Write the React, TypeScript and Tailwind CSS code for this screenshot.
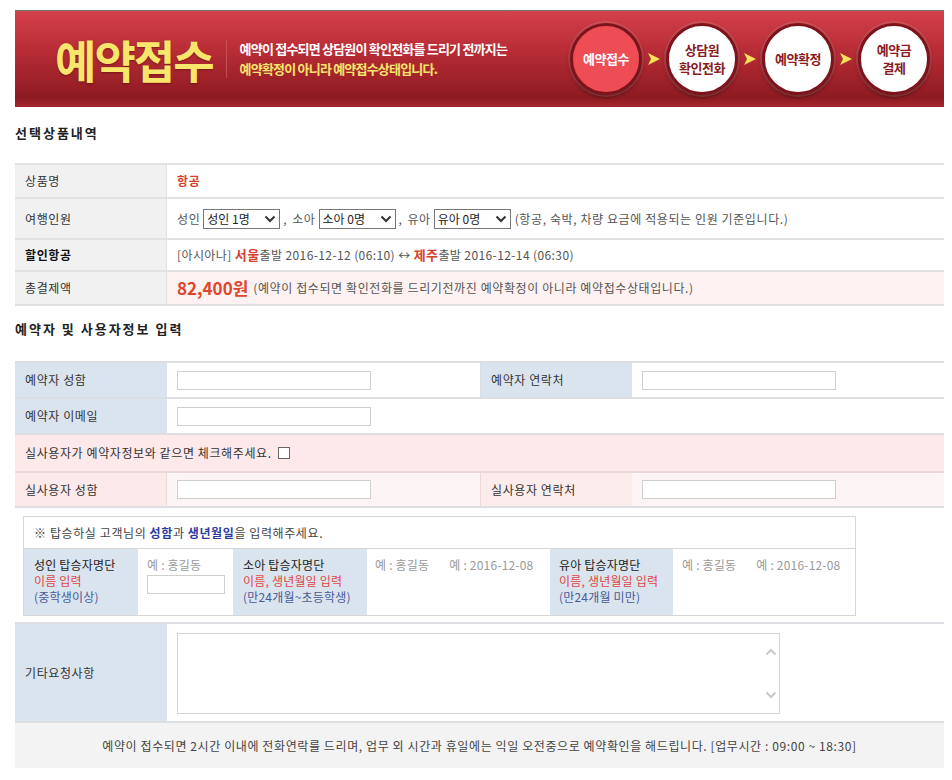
import React from "react";

const Chevron = ({ dir = "down", className = "" }: { dir?: "down" | "up"; className?: string }) => (
  <svg width="12" height="8" viewBox="0 0 12 8" className={className}>
    <path
      d={dir === "down" ? "M1.5 1.5 L6 6 L10.5 1.5" : "M1.5 6.5 L6 2 L10.5 6.5"}
      fill="none"
      stroke="currentColor"
      strokeWidth="2"
    />
  </svg>
);

const Select = ({ value }: { value: string }) => (
  <span className="inline-flex items-center justify-between w-[77px] h-[20px] border border-[#777] bg-white pl-[3px] pr-[3px] text-[12px] text-[#222] tracking-normal">
    <span>{value}</span>
    <Chevron className="text-[#333]" />
  </span>
);

const Arrow = () => (
  <svg width="14" height="14" viewBox="0 0 14 14">
    <polygon points="1,1 13,7 1,13 4,7" fill="#f6e15a" />
  </svg>
);

const Step = ({ lines, active }: { lines: string[]; active?: boolean }) => (
  <div
    className={`w-[72px] h-[72px] rounded-full border-[3px] border-[#7e141b] shadow-[0_0_0_2px_rgba(255,255,255,0.12),0_2px_4px_rgba(0,0,0,0.45)] flex flex-col items-center justify-center text-[13px] font-bold leading-[18px] tracking-[-0.5px] ${
      active ? "bg-[#ee4d56] text-white" : "bg-white text-[#8a1a22]"
    }`}
  >
    {lines.map((l) => (
      <span key={l}>{l}</span>
    ))}
  </div>
);

const Input = ({ w = "w-[194px]" }: { w?: string }) => (
  <div className={`${w} h-[19px] border border-[#cfcfcf] bg-white`} />
);

export default function App() {
  return (
    <div className="w-[952px] h-[780px] overflow-hidden bg-white pt-[10px] pl-[15px] text-[12px] tracking-[0.6px] text-[#555] font-['Noto_Sans_CJK_KR','Noto_Sans',sans-serif]">
      {/* banner */}
      <div className="w-[929px] h-[97px] border-t border-[#777] bg-[linear-gradient(180deg,#d3414b_0%,#bd2f39_35%,#a0222a_70%,#8d1a21_90%,#a5262d_100%)] flex items-center tracking-normal">
        <div className="pl-[40px] text-[45px] font-bold leading-none tracking-[-2px] text-[#f8e56b] [text-shadow:0_1px_2px_rgba(80,0,0,0.5)]">
          예약접수
        </div>
        <div className="ml-[13px] w-px h-[38px] bg-[#c65058]" />
        <div className="ml-[13px] flex flex-col text-[13px] font-bold leading-[20px] tracking-[-0.8px]">
          <span className="text-white">예약이 접수되면 상담원이 확인전화를 드리기 전까지는</span>
          <span className="text-[#f8e56b]">예약확정이 아니라 예약접수상태입니다.</span>
        </div>
        <div className="ml-auto mr-[14px] flex items-center gap-[5px]">
          <Step lines={["예약접수"]} active />
          <Arrow />
          <Step lines={["상담원", "확인전화"]} />
          <Arrow />
          <Step lines={["예약확정"]} />
          <Arrow />
          <Step lines={["예약금", "결제"]} />
        </div>
      </div>

      {/* section 1 */}
      <div className="pt-[17px] pb-[21px] text-[13px] font-bold text-[#222] leading-[18px] tracking-[2px]">선택상품내역</div>
      <div className="w-[929px] border-t-2 border-[#e2e2e2]">
        <div className="flex h-[34px] border-b-2 border-[#e2e2e2]">
          <div className="w-[152px] bg-[#f1f1f1] border-r border-[#e2e2e2] flex items-center pl-[10px] text-[#333]">상품명</div>
          <div className="flex-1 flex items-center pl-[10px] font-bold text-[#d9402c]">항공</div>
        </div>
        <div className="flex h-[41px] border-b-2 border-[#e2e2e2]">
          <div className="w-[152px] bg-[#f1f1f1] border-r border-[#e2e2e2] flex items-center pl-[10px] text-[#333]">여행인원</div>
          <div className="flex-1 flex items-center pl-[10px]">
            <span className="mr-[3px]">성인</span>
            <Select value="성인 1명" />
            <span className="ml-[3px] mr-[2px]">,</span>
            <span className="ml-[3px] mr-[3px]">소아</span>
            <Select value="소아 0명" />
            <span className="ml-[3px] mr-[2px]">,</span>
            <span className="ml-[3px] mr-[3px]">유아</span>
            <Select value="유아 0명" />
            <span className="ml-[4px]">(항공, 숙박, 차량 요금에 적용되는 인원 기준입니다.)</span>
          </div>
        </div>
        <div className="flex h-[32px] border-b-2 border-[#e2e2e2]">
          <div className="w-[152px] bg-[#f1f1f1] border-r border-[#e2e2e2] flex items-center pl-[10px] font-bold text-[#111]">할인항공</div>
          <div className="flex-1 flex items-center pl-[10px] tracking-[0.4px]">
            [아시아나]&nbsp;<b className="text-[13px] text-[#d9402c]">서울</b>출발 2016-12-12 (06:10) ↔&nbsp;
            <b className="text-[13px] text-[#d9402c]">제주</b>출발 2016-12-14 (06:30)
          </div>
        </div>
        <div className="flex h-[34px] border-b-2 border-[#e2e2e2] bg-[#fdf2f1]">
          <div className="w-[152px] bg-[#f1f1f1] border-r border-[#e2e2e2] flex items-center pl-[10px] text-[#333]">총결제액</div>
          <div className="flex-1 flex items-center pl-[10px]">
            <b className="text-[17px] tracking-normal text-[#e0452c] mr-[5px]">82,400원</b>
            (예약이 접수되면 확인전화를 드리기전까진 예약확정이 아니라 예약접수상태입니다.)
          </div>
        </div>
      </div>

      {/* section 2 */}
      <div className="pt-[14px] pb-[23px] text-[13px] font-bold text-[#222] leading-[18px] tracking-[2px]">예약자 및 사용자정보 입력</div>
      <div className="w-[929px] border-t-2 border-[#dcdee2] text-[#333]">
        <div className="grid grid-cols-[152px_313px_152px_1fr] h-[36px] border-b-2 border-[#dcdee2]">
          <div className="bg-[#dae4ef] flex items-center pl-[10px]">예약자 성함</div>
          <div className="flex items-center pl-[10px]"><Input /></div>
          <div className="bg-[#dae4ef] flex items-center pl-[10px] border-l border-[#dcdee2]">예약자 연락처</div>
          <div className="flex items-center pl-[10px]"><Input /></div>
        </div>
        <div className="flex h-[36px] border-b-2 border-[#dcdee2]">
          <div className="w-[152px] bg-[#dae4ef] flex items-center pl-[10px]">예약자 이메일</div>
          <div className="flex items-center pl-[10px]"><Input /></div>
        </div>
        <div className="flex items-center h-[38px] border-b-2 border-[#ead8da] bg-[#fde9ea] pl-[10px]">
          실사용자가 예약자정보와 같으면 체크해주세요.
          <span className="ml-[6px] inline-block w-[12px] h-[12px] border border-[#666] bg-white" />
        </div>
        <div className="grid grid-cols-[152px_313px_152px_1fr] h-[35px] border-b-2 border-[#dcdee2] bg-[#fdf5f5]">
          <div className="bg-[#fce9ea] flex items-center pl-[10px] border-r border-[#ead8da]">실사용자 성함</div>
          <div className="flex items-center pl-[10px]"><Input /></div>
          <div className="bg-[#fcecec] flex items-center pl-[10px] border-l border-[#ead8da]">실사용자 연락처</div>
          <div className="flex items-center pl-[10px]"><Input /></div>
        </div>

        {/* passenger list */}
        <div className="h-[116px] border-b-2 border-[#dcdee2] pt-[8px] pl-[8px]">
          <div className="w-[833px] border border-[#d6d6d6]">
            <div className="h-[32px] flex items-center pl-[10px] border-b border-[#d6d6d6] text-[#444]">
              ※ 탑승하실 고객님의&nbsp;<b className="text-[#2d3c9e]">성함</b>과&nbsp;<b className="text-[#2d3c9e]">생년월일</b>을 입력해주세요.
            </div>
            <div className="grid grid-cols-[114px_95px_134px_183px_123px_1fr] h-[66px] tracking-[0.2px]">
              <div className="bg-[#dae4ef] pl-[10px] pt-[8px] leading-[16px]">
                <div className="text-[#222]">성인 탑승자명단</div>
                <div className="text-[#e04545]">이름 입력</div>
                <div className="text-[#4a5a96]">(중학생이상)</div>
              </div>
              <div className="pl-[9px] pt-[8px] leading-[16px]">
                <div className="text-[#999]">예 : 홍길동</div>
                <div className="mt-[2px]"><Input w="w-[78px]" /></div>
              </div>
              <div className="bg-[#dae4ef] pl-[10px] pt-[8px] leading-[16px]">
                <div className="text-[#222]">소아 탑승자명단</div>
                <div className="text-[#e04545]">이름, 생년월일 입력</div>
                <div className="text-[#4a5a96]">(만24개월~초등학생)</div>
              </div>
              <div className="pl-[8px] pt-[8px] leading-[16px] text-[#999] flex gap-[20px]">
                <span>예 : 홍길동</span>
                <span>예 : 2016-12-08</span>
              </div>
              <div className="bg-[#dae4ef] pl-[9px] pt-[8px] leading-[16px]">
                <div className="text-[#222]">유아 탑승자명단</div>
                <div className="text-[#e04545]">이름, 생년월일 입력</div>
                <div className="text-[#4a5a96]">(만24개월 미만)</div>
              </div>
              <div className="pl-[9px] pt-[8px] leading-[16px] text-[#999] flex gap-[20px]">
                <span>예 : 홍길동</span>
                <span>예 : 2016-12-08</span>
              </div>
            </div>
          </div>
        </div>

        {/* request */}
        <div className="flex h-[99px] border-b-2 border-[#dcdee2]">
          <div className="w-[152px] bg-[#dae4ef] flex items-center pl-[10px]">기타요청사항</div>
          <div className="pl-[10px] pt-[9px]">
            <div className="w-[603px] h-[81px] border border-[#d4d4d4] bg-white flex justify-end">
              <div className="w-[17px] flex flex-col items-center justify-between py-[14px] text-[#c8c8c8]">
                <Chevron dir="up" />
                <Chevron />
              </div>
            </div>
          </div>
        </div>

        <div className="h-[45px] bg-[#f3f3f3] flex items-center justify-center text-[#444]">
          예약이 접수되면 2시간 이내에 전화연락를 드리며, 업무 외 시간과 휴일에는 익일 오전중으로 예약확인을 해드립니다. [업무시간 : 09:00 ~ 18:30]
        </div>
      </div>
    </div>
  );
}
